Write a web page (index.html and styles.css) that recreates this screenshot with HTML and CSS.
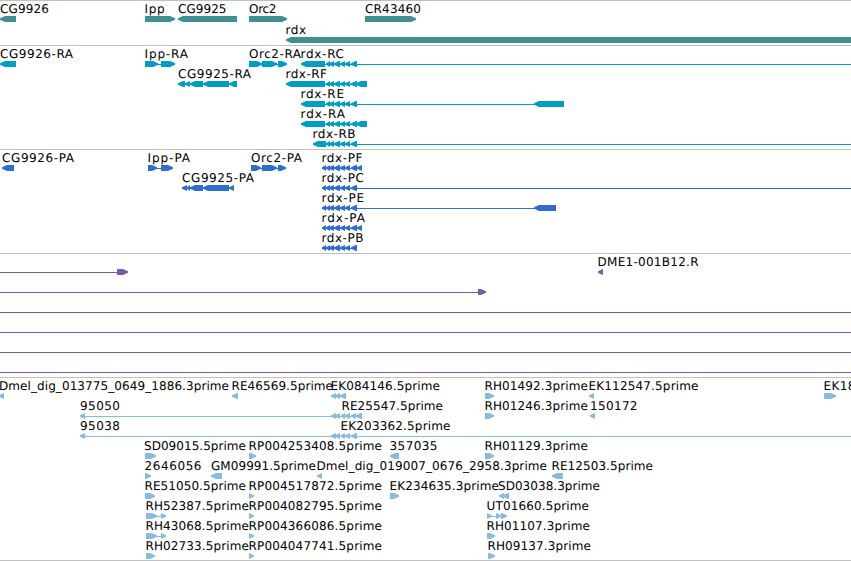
FILE: index.html
```html
<!DOCTYPE html>
<html lang="en">
  <head>
    <meta charset="UTF-8" />
    <meta name="viewport" content="width=device-width, initial-scale=1.0" />
    <title>Genome Browser - rdx region</title>
    <link rel="stylesheet" href="styles.css">
  </head>
  <body>
    <main class="browser" id="browser"></main>
    <script src="tracks.js"></script>
  </body>
</html>
```
FILE: styles.css
```css
body {
  margin: 0;
  background-color: #fff;
  overflow: hidden;
}
.browser {
  display: flex;
  flex-direction: column;
  width: 851px;
  border-bottom: 1px solid #c0c0c0;
}
.track {
  box-sizing: border-box;
  border-top: 1px solid #c0c0c0;
}
.track svg {
  display: block;
  width: 851px;
}
.track text {
  font-family: "DejaVu Sans", sans-serif;
  font-size: 12px;
  text-rendering: geometricPrecision;
  fill: #000;
}
.gene {
  height: 45px;
  color: #408f93;
}
.transcript {
  height: 104px;
  color: #009ec0;
}
.cds {
  height: 104px;
  color: #306ecd;
}
.bac {
  height: 124px;
  color: #7959ab;
}
.est {
  height: 183px;
  color: #87bcdf;
}
.shape {
  fill: currentColor;
}
.intron {
  fill: currentColor;
  shape-rendering: crispEdges;
}
```
FILE: tracks.js
```js
const WIDTH = 851;

// small exons shared by the rdx isoforms
const rdx = [[326, 330], [329, 334], [334, 340], [340, 345], [345, 350], [351, 357]];
const rdxCds = [[322, 326], ...rdx];

// feature: strand, exons, label [text, x, width], line [from, to]
const f = (strand, exons, label, line) => ({ strand, exons, label, line });

const tracks = [
  {
    name: "gene",
    pitch: 21,
    rows: [
      [
        f("-", [[0, 16]], ["CG9926", 0, 49]),
        f("+", [[145, 175]], ["Ipp", 144.5, 20]),
        f("-", [[178, 237]], ["CG9925", 178, 48.5]),
        f("+", [[249, 287]], ["Orc2", 249, 27.5]),
        f("+", [[365, 416]], ["CR43460", 365, 56]),
      ],
      [f("-", [[286, 860]], ["rdx", 285.5, 20.5])],
    ],
  },
  {
    name: "transcript",
    pitch: 20,
    rows: [
      [
        f("-", [[0, 16]], ["CG9926-RA", 0, 73]),
        f("+", [[145, 158], [161, 175]], ["Ipp-RA", 144.5, 43.5], [145, 175]),
        f("+", [[249, 262], [262, 277], [278, 287]], ["Orc2-RA", 249, 52], [249, 287]),
        f("-", [[301, 325], ...rdx], ["rdx-RC", 300.5, 43.5], [325, WIDTH]),
      ],
      [
        f("-", [[178, 185], [185, 190], [190, 203], [203, 229], [229, 237]], ["CG9925-RA", 178, 73], [178, 237]),
        f("-", [[286, 325], ...rdx, [356, 367]], ["rdx-RF", 285.5, 41.5], [325, 367]),
      ],
      [f("-", [[301, 325], ...rdx, [534, 564]], ["rdx-RE", 300.5, 43.5], [325, 564])],
      [f("-", [[301, 325], ...rdx, [356, 367]], ["rdx-RA", 300.5, 44.5], [325, 367])],
      [f("-", [[313, 326], ...rdx], ["rdx-RB", 312.5, 43], [325, WIDTH])],
    ],
  },
  {
    name: "cds",
    pitch: 20,
    rows: [
      [
        f("-", [[2, 14]], ["CG9926-PA", 2, 72]),
        f("+", [[148, 157], [161, 173]], ["Ipp-PA", 147.5, 42.5], [148, 173]),
        f("+", [[251, 261], [262, 277], [278, 286]], ["Orc2-PA", 251, 51], [251, 286]),
        f("-", [...rdxCds, [357, 362]], ["rdx-PF", 321.5, 41], [322, 362]),
      ],
      [
        f("-", [[182, 187], [187, 190], [190, 203], [203, 229], [229, 234]], ["CG9925-PA", 182, 72], [182, 234]),
        f("-", rdxCds, ["rdx-PC", 321.5, 42.5], [322, WIDTH]),
      ],
      [f("-", [...rdxCds, [534, 556]], ["rdx-PE", 321.5, 42.5], [322, 556])],
      [f("-", [...rdxCds, [357, 362]], ["rdx-PA", 321.5, 43.5], [322, 362])],
      [f("-", rdxCds, ["rdx-PB", 321.5, 42], [322, 357])],
    ],
  },
  {
    name: "bac",
    pitch: 20,
    rows: [
      [
        f("+", [[117, 128]], null, [0, 117]),
        f("-", [[598, 603]], ["DME1-001B12.R", 597.5, 101]),
      ],
      [f("+", [[478, 486]], null, [0, 478])],
      [f("+", [], null, [0, WIDTH])],
      [f("+", [], null, [0, WIDTH])],
      [f("+", [], null, [0, WIDTH])],
      [f("+", [], null, [0, WIDTH])],
    ],
  },
  {
    name: "est",
    pitch: 20,
    rows: [
      [
        f("-", [[-1, 4]], ["Dmel_dig_013775_0649_1886.3prime", -1, 230]),
        f("-", [[232, 238]], ["RE46569.5prime", 231.5, 101.5]),
        f("-", [[331, 336], [335, 340], [340, 346]], ["EK084146.5prime", 330.5, 109.5], [331, 346]),
        f("+", [[485, 494]], ["RH01492.3prime", 484.5, 103.5]),
        f("-", [[589, 594]], ["EK112547.5prime", 588.5, 110]),
        f("+", [[824, 836]], ["EK18", 823.5, 32]),
      ],
      [
        f("-", [[80, 85]], ["95050", 80, 40], [85, 331]),
        f("-", [[331, 336], [335, 340], [341, 345], [345, 350], [351, 356], [356, 362]], ["RE25547.5prime", 341.5, 101.5], [331, 362]),
        f("+", [[485, 494]], ["RH01246.3prime", 484.5, 103.5]),
        f("-", [[590, 595]], ["150172", 590, 47.5]),
      ],
      [
        f("-", [[80, 85]], ["95038", 80, 40], [85, WIDTH]),
        f("-", [[331, 336], [335, 340], [341, 345], [345, 350], [351, 357]], ["EK203362.5prime", 340.5, 110]),
      ],
      [
        f("+", [[145, 156]], ["SD09015.5prime", 144, 102]),
        f("+", [[249, 256]], ["RP004253408.5prime", 248.5, 133.5]),
        f("-", [[390, 399]], ["357035", 389.5, 48]),
        f("+", [[485, 494]], ["RH01129.3prime", 484.5, 103.5]),
      ],
      [
        f("+", [[145, 151]], ["2646056", 144.5, 57]),
        f("-", [[211, 222]], ["GM09991.5prime", 211, 105]),
        f("-", [[317, 322]], ["Dmel_dig_019007_0676_2958.3prime", 316.5, 230.5]),
        f("-", [[552, 563]], ["RE12503.5prime", 551.5, 101.5]),
      ],
      [
        f("+", [[145, 155]], ["RE51050.5prime", 144.5, 101.5]),
        f("+", [[249, 254]], ["RP004517872.5prime", 248.5, 133.5]),
        f("+", [[390, 399]], ["EK234635.3prime", 389.5, 109.5]),
        f("-", [[499, 504], [503, 509]], ["SD03038.3prime", 498, 102]),
      ],
      [
        f("+", [[146, 157], [161, 166]], ["RH52387.5prime", 145.5, 103.5], [146, 166]),
        f("+", [[249, 254]], ["RP004082795.5prime", 248.5, 133.5]),
        f("+", [[487, 492], [496, 501], [501, 507]], ["UT01660.5prime", 486.5, 102.5], [487, 507]),
      ],
      [
        f("+", [[146, 157], [161, 166]], ["RH43068.5prime", 145.5, 103.5], [146, 166]),
        f("+", [[249, 254]], ["RP004366086.5prime", 248.5, 133.5]),
        f("+", [[487, 495]], ["RH01107.3prime", 486.5, 103.5]),
      ],
      [
        f("+", [[146, 155]], ["RH02733.5prime", 145.5, 103.5]),
        f("+", [[249, 254]], ["RP004047741.5prime", 248.5, 133.5]),
        f("+", [[488, 495]], ["RH09137.3prime", 487.5, 103.5]),
      ],
    ],
  },
];

// arrow-ended box, 6px high, with a blunt tip pointing along the strand
function exon(strand, [start, end], y) {
  const head = Math.min(5, end - start);
  const [tip, neck, back] = strand === "-"
    ? [start, start + head, end]
    : [end, end - head, start];
  const d = `M${tip} ${y + 2.2}L${neck} ${y}H${back}V${y + 6}H${neck}L${tip} ${y + 3.8}Z`;
  return `<path class="shape" d="${d}"/>`;
}

function drawFeature({ strand, exons, label, line }, top) {
  let out = "";
  if (line) {
    out += `<rect class="intron" x="${line[0]}" y="${top + 18}" width="${line[1] - line[0]}" height="1"/>`;
  }
  out += exons.map((e) => exon(strand, e, top + 15)).join("");
  if (label) {
    out += `<text x="${label[1]}" y="${top + 12}" textLength="${label[2]}">${label[0]}</text>`;
  }
  return out;
}

const browser = document.getElementById("browser");
tracks.forEach(({ name, pitch, rows }) => {
  const section = document.createElement("section");
  section.className = `track ${name}`;
  const shapes = rows.map((row, i) => row.map((feature) => drawFeature(feature, i * pitch)).join("")).join("");
  section.innerHTML = `<svg height="100%">${shapes}</svg>`;
  browser.appendChild(section);
});
```
